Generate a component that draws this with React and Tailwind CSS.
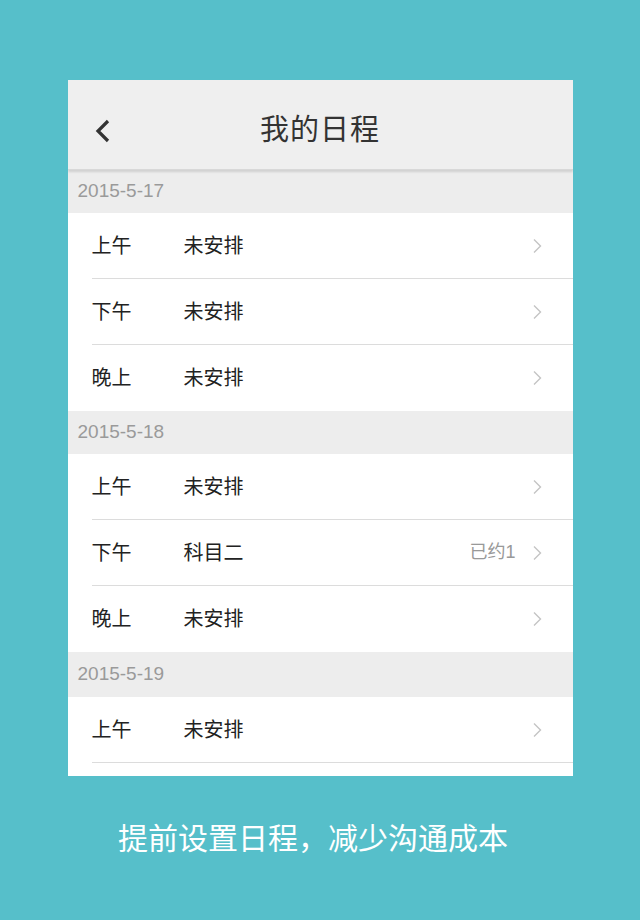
import React from 'react';

const groups = [
  {
    date: '2015-5-17',
    h: 'h-[43px]',
    rows: [
      { slot: '上午', text: '未安排' },
      { slot: '下午', text: '未安排' },
      { slot: '晚上', text: '未安排' },
    ],
  },
  {
    date: '2015-5-18',
    h: 'h-[43px]',
    rows: [
      { slot: '上午', text: '未安排' },
      { slot: '下午', text: '科目二', note: '已约1' },
      { slot: '晚上', text: '未安排' },
    ],
  },
  {
    date: '2015-5-19',
    h: 'h-[45px]',
    more: true,
    rows: [{ slot: '上午', text: '未安排' }],
  },
];

function Chevron() {
  return (
    <svg width="11" height="16" viewBox="0 0 11 16" fill="none" className="shrink-0">
      <path d="M2 1.5 L8.5 8 L2 14.5" stroke="#c4c4c4" strokeWidth="1.4" />
    </svg>
  );
}

export default function App() {
  return (
    <div
      className="min-h-[920px] w-full bg-[#56bfca] flex flex-col items-center pt-[80px]"
      style={{ fontFamily: '"Liberation Sans", "Noto Sans CJK SC", sans-serif' }}
    >
      <div className="w-[505px] h-[696px] bg-white overflow-hidden flex flex-col">
        {/* title bar */}
        <div className="relative z-10 h-[90px] shrink-0 bg-[#efefef] flex items-center pt-[13px] shadow-[0_2px_2px_rgba(0,0,0,0.12)] border-b border-[#d8d8d8]">
          <div className="w-[70px] pl-[27px] flex items-center">
            <svg width="16" height="24" viewBox="0 0 16 24" fill="none">
              <path d="M13 2 L3 12 L13 22" stroke="#333" strokeWidth="3.2" strokeLinejoin="miter" />
            </svg>
          </div>
          <div className="flex-1 text-center text-[29px] text-[#333] tracking-[1px] pr-[70px]">我的日程</div>
        </div>

        {groups.map((g) => (
          <div key={g.date} className="shrink-0">
            <div className={`${g.h} bg-[#ededed] flex items-center pl-[10px] text-[19px] text-[#9a9a9a]`}>
              {g.date}
            </div>
            {g.rows.map((r, i) => (
              <div key={i} className="pl-[24px] bg-white">
                <div
                  className={`h-[66px] flex items-center pr-[30px] text-[20px] text-[#222] ${
                    i < g.rows.length - 1 || g.more ? 'border-b border-[#dcdcdc]' : ''
                  }`}
                >
                  <span className="w-[92px]">{r.slot}</span>
                  <span className="flex-1">{r.text}</span>
                  {r.note && <span className="text-[18px] text-[#999] mr-[16px]">{r.note}</span>}
                  <Chevron />
                </div>
              </div>
            ))}
          </div>
        ))}
      </div>

      <div className="mt-[40px] mr-[14px] text-[30px] leading-[45px] text-white">提前设置日程，减少沟通成本</div>
    </div>
  );
}
